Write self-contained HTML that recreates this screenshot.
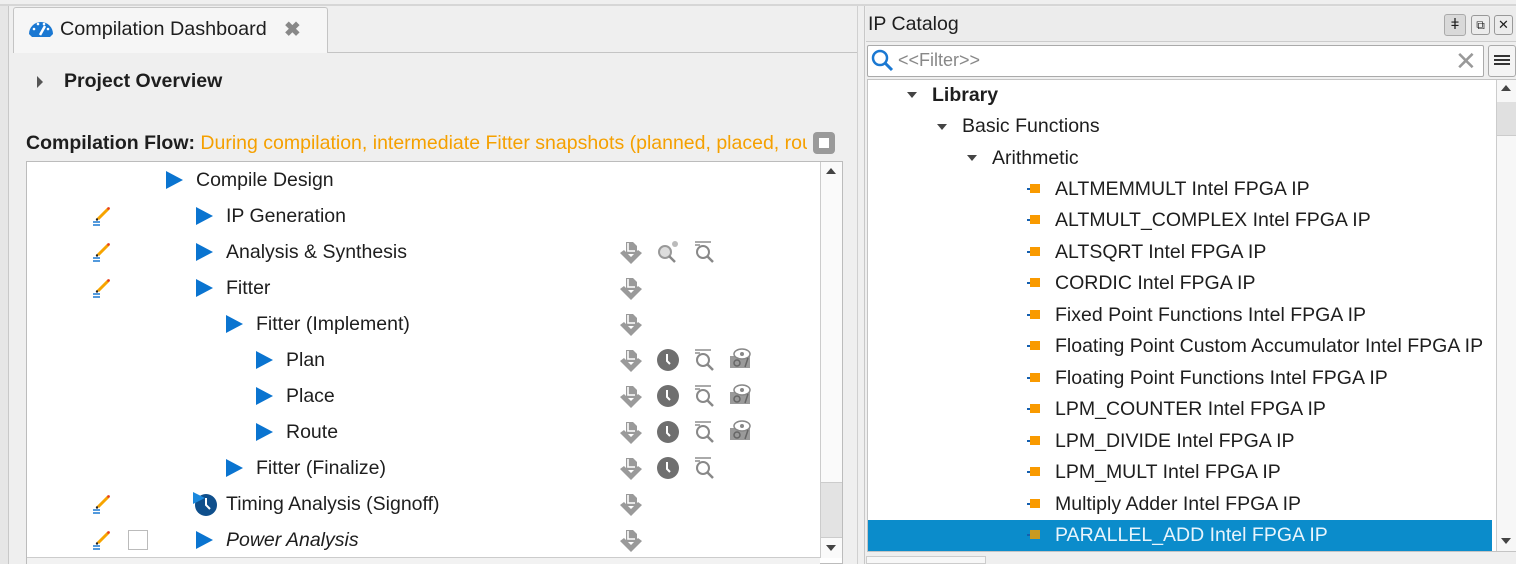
<!DOCTYPE html>
<html><head><meta charset="utf-8"><style>
*{box-sizing:border-box;margin:0;padding:0}
body{width:1516px;height:564px;overflow:hidden;background:#efefef;font-family:"Liberation Sans",sans-serif;font-size:19.5px;color:#1e1e1e;position:relative}
.a{position:absolute}
.row{position:absolute;height:36px;line-height:36px;white-space:nowrap}
.tri{position:absolute;width:0;height:0;border-top:9px solid transparent;border-bottom:9px solid transparent;border-left:17px solid #0a74d0}
.ip{position:absolute;height:31px;line-height:31px;white-space:nowrap}
.sq{position:absolute;left:1030px;top:10px;width:10px;height:9px;background:#f99a00}
.sq:before{content:"";position:absolute;left:-3px;top:4px;width:3px;height:2px;background:#1560b0}
.dn{position:absolute;width:0;height:0;border-left:5px solid transparent;border-right:5px solid transparent;border-top:6px solid #444}
</style></head><body>
<div class="a" style="left:0;top:4px;width:1516px;height:2px;background:#d6d6d6"></div>
<div class="a" style="left:0;top:6px;width:9px;height:558px;background:#e6e6e6;border-right:1px solid #c8c8c8"></div>
<div class="a" style="left:13px;top:7px;width:315px;height:46px;background:#f6f6f6;border:1px solid #c4c4c4;border-bottom:none;border-radius:3px 3px 0 0"></div>
<div class="a" style="left:328px;top:52px;width:530px;height:1px;background:#c4c4c4"></div>
<svg class="a" style="left:28px;top:18px" width="26" height="20" viewBox="0 0 26 20"><path d="M1 16 A12 12 0 0 1 25 16 L22 19 L4 19 Z" fill="#1a78d2"/><path d="M12 17 L17 8" stroke="#fff" stroke-width="2.5"/><circle cx="6" cy="11" r="1.3" fill="#fff"/><circle cx="10" cy="6" r="1.3" fill="#fff"/><circle cx="16" cy="6" r="1.3" fill="#fff"/><circle cx="20" cy="11" r="1.3" fill="#fff"/></svg>
<div class="a" style="left:60px;top:18px;font-size:19.8px">Compilation Dashboard</div>
<div class="a" style="left:284px;top:17px;font-size:20px;color:#888;font-weight:bold">✖</div>
<div class="a" style="left:37px;top:76px;width:0;height:0;border-top:6px solid transparent;border-bottom:6px solid transparent;border-left:6px solid #555"></div>
<div class="a" style="left:64px;top:70px;font-weight:bold;font-size:19.5px">Project Overview</div>
<div class="a" style="left:26px;top:132px;font-size:19.5px;white-space:nowrap;width:781px;overflow:hidden"><b>Compilation Flow:</b> <span style="color:#f5a000">During compilation, intermediate Fitter snapshots (planned, placed, routed) are</span></div>
<div class="a" style="left:813px;top:132px;width:22px;height:22px;background:#9a9a9a;border-radius:4px"><div class="a" style="left:6px;top:6px;width:10px;height:10px;background:#fff"></div></div>
<div class="a" style="left:26px;top:161px;width:817px;height:403px;background:#fff;border:1px solid #bcbcbc"></div>
<div class="a" style="left:820px;top:162px;width:22px;height:396px;background:#fafafa;border-left:1px solid #ccc"></div>
<div class="a" style="left:826px;top:168px;width:0;height:0;border-left:5px solid transparent;border-right:5px solid transparent;border-bottom:6px solid #444"></div>
<div class="a" style="left:821px;top:482px;width:21px;height:56px;background:#e3e3e3;border-top:1px solid #ccc;border-bottom:1px solid #ccc"></div>
<div class="dn" style="left:826px;top:545px"></div>
<div class="a" style="left:27px;top:557px;width:793px;height:7px;background:#f2f2f2;border-top:1px solid #ccc"></div>

<div class="tri" style="left:166px;top:171px"></div><div class="row" style="left:196px;top:162px">Compile Design</div>
<div class="tri" style="left:196px;top:207px"></div><div class="row" style="left:226px;top:198px">IP Generation</div>
<div class="tri" style="left:196px;top:243px"></div><div class="row" style="left:226px;top:234px">Analysis &amp; Synthesis</div>
<div class="tri" style="left:196px;top:279px"></div><div class="row" style="left:226px;top:270px">Fitter</div>
<div class="tri" style="left:226px;top:315px"></div><div class="row" style="left:256px;top:306px">Fitter (Implement)</div>
<div class="tri" style="left:256px;top:351px"></div><div class="row" style="left:286px;top:342px">Plan</div>
<div class="tri" style="left:256px;top:387px"></div><div class="row" style="left:286px;top:378px">Place</div>
<div class="tri" style="left:256px;top:423px"></div><div class="row" style="left:286px;top:414px">Route</div>
<div class="tri" style="left:226px;top:459px"></div><div class="row" style="left:256px;top:450px">Fitter (Finalize)</div>
<svg class="a" style="left:193px;top:492px" width="26" height="26"><circle cx="13" cy="13" r="11" fill="#0f4f8c"/><path d="M13 6 L13 13 L17 17" stroke="#fff" stroke-width="2" fill="none"/><path d="M0 0 L12 6 L0 12Z" fill="#1a88dd"/></svg>
<div class="row" style="left:226px;top:486px">Timing Analysis (Signoff)</div>
<div class="tri" style="left:196px;top:531px"></div><div class="row" style="left:226px;top:522px;font-style:italic">Power Analysis</div>
<div class="a" style="left:128px;top:530px;width:20px;height:20px;border:1px solid #bbb;background:#fff"></div>

<svg width="0" height="0" style="position:absolute"><defs>
<g id="pen"><path d="M6 14 L16 4" stroke="#f7a400" stroke-width="3"/><circle cx="16.5" cy="3.5" r="1.4" fill="#e8401c"/><circle cx="5" cy="14.5" r="1.2" fill="#222"/><path d="M1 17h7M1 20h7" stroke="#1a78d2" stroke-width="1.5"/></g>
<g id="dl"><path d="M7 2 h7 l4 4 v8 h-11z" fill="#9a9a9a"/><path d="M9 3 v8 h7" stroke="#fff" stroke-width="1.6" fill="none"/><path d="M1 13 L12 24 L23 13 L19 10 L12 17 L5 10Z" fill="#9a9a9a"/></g>
<g id="clk"><circle cx="12" cy="12" r="11" fill="#6f6f6f"/><path d="M11 6 L11 13 L14 16" stroke="#fff" stroke-width="2" fill="none"/></g>
<g id="mag"><path d="M3 2 h16 M3 5 h5" stroke="#aaa" stroke-width="2"/><circle cx="11" cy="12" r="6" fill="none" stroke="#888" stroke-width="2"/><path d="M15 16 L21 22" stroke="#888" stroke-width="2.5"/></g>
<g id="cam"><rect x="2" y="10" width="20" height="12" fill="#9a9a9a"/><ellipse cx="14" cy="8" rx="8" ry="5" fill="#fff" stroke="#888" stroke-width="1.5"/><circle cx="14" cy="8" r="2" fill="#888"/><circle cx="9" cy="17" r="3" fill="none" stroke="#666" stroke-width="1.5"/><path d="M17 21 L20 12" stroke="#666" stroke-width="1.5"/></g>
</defs></svg>
<svg class="a" style="left:92px;top:205px" width="22" height="22"><use href="#pen"/></svg>
<svg class="a" style="left:92px;top:241px" width="22" height="22"><use href="#pen"/></svg>
<svg class="a" style="left:92px;top:277px" width="22" height="22"><use href="#pen"/></svg>
<svg class="a" style="left:92px;top:493px" width="22" height="22"><use href="#pen"/></svg>
<svg class="a" style="left:92px;top:529px" width="22" height="22"><use href="#pen"/></svg>

<svg class="a" style="left:619px;top:240px" width="26" height="26"><use href="#dl"/></svg>
<svg class="a" style="left:655px;top:240px" width="26" height="26"><circle cx="10" cy="12" r="6" fill="#ddd" stroke="#999" stroke-width="2"/><path d="M14 16 L20 22" stroke="#888" stroke-width="2.5"/><circle cx="20" cy="4" r="3" fill="#bbb"/></svg>
<svg class="a" style="left:692px;top:240px" width="26" height="26"><use href="#mag"/></svg>
<svg class="a" style="left:619px;top:276px" width="26" height="26"><use href="#dl"/></svg>
<svg class="a" style="left:619px;top:312px" width="26" height="26"><use href="#dl"/></svg>
<svg class="a" style="left:619px;top:348px" width="26" height="26"><use href="#dl"/></svg>
<svg class="a" style="left:656px;top:348px" width="26" height="26"><use href="#clk"/></svg>
<svg class="a" style="left:692px;top:348px" width="26" height="26"><use href="#mag"/></svg>
<svg class="a" style="left:728px;top:346px" width="26" height="26"><use href="#cam"/></svg>
<svg class="a" style="left:619px;top:384px" width="26" height="26"><use href="#dl"/></svg>
<svg class="a" style="left:656px;top:384px" width="26" height="26"><use href="#clk"/></svg>
<svg class="a" style="left:692px;top:384px" width="26" height="26"><use href="#mag"/></svg>
<svg class="a" style="left:728px;top:382px" width="26" height="26"><use href="#cam"/></svg>
<svg class="a" style="left:619px;top:420px" width="26" height="26"><use href="#dl"/></svg>
<svg class="a" style="left:656px;top:420px" width="26" height="26"><use href="#clk"/></svg>
<svg class="a" style="left:692px;top:420px" width="26" height="26"><use href="#mag"/></svg>
<svg class="a" style="left:728px;top:418px" width="26" height="26"><use href="#cam"/></svg>
<svg class="a" style="left:619px;top:456px" width="26" height="26"><use href="#dl"/></svg>
<svg class="a" style="left:656px;top:456px" width="26" height="26"><use href="#clk"/></svg>
<svg class="a" style="left:692px;top:456px" width="26" height="26"><use href="#mag"/></svg>
<svg class="a" style="left:619px;top:492px" width="26" height="26"><use href="#dl"/></svg>
<svg class="a" style="left:619px;top:528px" width="26" height="26"><use href="#dl"/></svg>

<div class="a" style="left:857px;top:6px;width:1px;height:558px;background:#d0d0d0"></div>
<div class="a" style="left:864px;top:6px;width:1px;height:558px;background:#c8c8c8"></div>

<div class="a" style="left:866px;top:7px;width:650px;height:35px;background:#ececec;border-bottom:1px solid #ccc"></div>
<div class="a" style="left:868px;top:13px;font-size:19.5px">IP Catalog</div>
<div class="a" style="left:1444px;top:14px;width:22px;height:22px;background:#d9d9d9;border:1px solid #aaa;border-radius:3px;text-align:center;line-height:20px;font-size:15px">ǂ</div>
<div class="a" style="left:1471px;top:15px;width:19px;height:20px;border:1px solid #999;border-radius:3px;text-align:center;line-height:18px;font-size:12px">⧉</div>
<div class="a" style="left:1494px;top:15px;width:19px;height:20px;border:1px solid #999;border-radius:3px;text-align:center;line-height:18px;font-size:13px">✕</div>
<div class="a" style="left:867px;top:45px;width:617px;height:32px;background:#fff;border:1px solid #aaa;border-radius:2px"></div>
<svg class="a" style="left:870px;top:48px" width="26" height="26"><circle cx="10" cy="10" r="7" fill="none" stroke="#1a78d2" stroke-width="2.5"/><path d="M15 15 L22 22" stroke="#1a78d2" stroke-width="3"/></svg>
<div class="a" style="left:898px;top:50px;color:#888;font-size:18px">&lt;&lt;Filter&gt;&gt;</div>
<div class="a" style="left:1455px;top:46px;color:#999;font-size:26px;font-weight:300">✕</div>
<div class="a" style="left:1488px;top:45px;width:28px;height:32px;background:#f4f4f4;border:1px solid #aaa;border-radius:3px"></div>
<div class="a" style="left:1494px;top:55px;width:16px;height:2px;background:#333;box-shadow:0 4px 0 #333,0 8px 0 #333"></div>
<div class="a" style="left:867px;top:79px;width:649px;height:473px;background:#fff;border:1px solid #c4c4c4"></div>
<div class="a" style="left:1496px;top:80px;width:20px;height:471px;background:#f7f7f7;border-left:1px solid #ccc"></div>
<div class="a" style="left:1501px;top:85px;width:0;height:0;border-left:5px solid transparent;border-right:5px solid transparent;border-bottom:6px solid #444"></div>
<div class="a" style="left:1497px;top:102px;width:19px;height:34px;background:#e0e0e0;border-bottom:1px solid #ccc"></div>
<div class="dn" style="left:1501px;top:538px"></div>

<div class="dn" style="left:907px;top:92px"></div><div class="ip" style="left:932px;top:80px;font-weight:bold">Library</div>
<div class="dn" style="left:937px;top:124px"></div><div class="ip" style="left:962px;top:111px">Basic Functions</div>
<div class="dn" style="left:967px;top:155px"></div><div class="ip" style="left:992px;top:143px">Arithmetic</div>
<div class="a" style="left:868px;top:520px;width:624px;height:31px;background:#0b8ccb"></div>
<div class="ip" style="left:0;top:174px;width:1500px"><span class="sq"></span><span style="position:absolute;left:1055px">ALTMEMMULT Intel FPGA IP</span></div>
<div class="ip" style="left:0;top:205px;width:1500px"><span class="sq"></span><span style="position:absolute;left:1055px">ALTMULT_COMPLEX Intel FPGA IP</span></div>
<div class="ip" style="left:0;top:237px;width:1500px"><span class="sq"></span><span style="position:absolute;left:1055px">ALTSQRT Intel FPGA IP</span></div>
<div class="ip" style="left:0;top:268px;width:1500px"><span class="sq"></span><span style="position:absolute;left:1055px">CORDIC Intel FPGA IP</span></div>
<div class="ip" style="left:0;top:300px;width:1500px"><span class="sq"></span><span style="position:absolute;left:1055px">Fixed Point Functions Intel FPGA IP</span></div>
<div class="ip" style="left:0;top:331px;width:1500px"><span class="sq"></span><span style="position:absolute;left:1055px">Floating Point Custom Accumulator Intel FPGA IP</span></div>
<div class="ip" style="left:0;top:363px;width:1500px"><span class="sq"></span><span style="position:absolute;left:1055px">Floating Point Functions Intel FPGA IP</span></div>
<div class="ip" style="left:0;top:394px;width:1500px"><span class="sq"></span><span style="position:absolute;left:1055px">LPM_COUNTER Intel FPGA IP</span></div>
<div class="ip" style="left:0;top:426px;width:1500px"><span class="sq"></span><span style="position:absolute;left:1055px">LPM_DIVIDE Intel FPGA IP</span></div>
<div class="ip" style="left:0;top:457px;width:1500px"><span class="sq"></span><span style="position:absolute;left:1055px">LPM_MULT Intel FPGA IP</span></div>
<div class="ip" style="left:0;top:489px;width:1500px"><span class="sq"></span><span style="position:absolute;left:1055px">Multiply Adder Intel FPGA IP</span></div>
<div class="ip" style="left:0;top:520px;width:1500px"><span class="sq" style="background:#c99a20"></span><span style="position:absolute;left:1055px;color:#e8f4fc">PARALLEL_ADD Intel FPGA IP</span></div>
<div class="a" style="left:866px;top:556px;width:120px;height:8px;background:#f7f7f7;border:1px solid #ccc"></div>
</body></html>
